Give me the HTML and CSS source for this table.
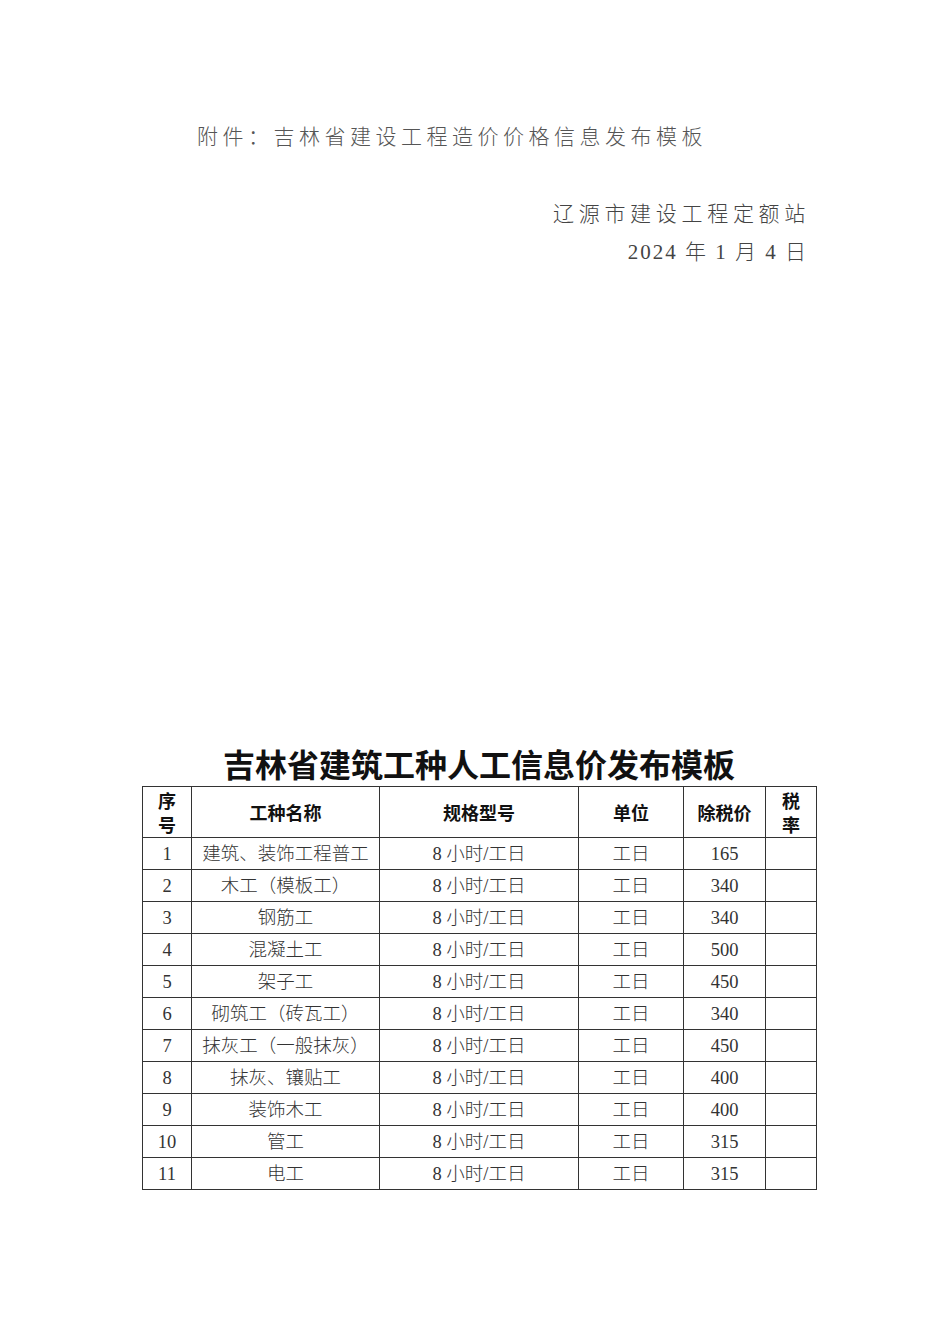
FILE: index.html
```html
<!DOCTYPE html>
<html lang="zh-CN">
<head>
<meta charset="utf-8">
<link rel="stylesheet" href="styles.css">
</head>
<body>
<div class="page">
  <p class="attach">附件：吉林省建设工程造价价格信息发布模板</p>
  <div class="org">
    <p class="org-name">辽源市建设工程定额站</p>
    <p class="org-date">2024 年 1 月 4 日</p>
  </div>
  <div class="sheet">
    <h1 class="title">吉林省建筑工种人工信息价发布模板</h1>
    <table class="grid">
      <colgroup>
        <col class="c1"><col class="c2"><col class="c3"><col class="c4"><col class="c5"><col class="c6">
      </colgroup>
      <thead>
        <tr><th>序<br>号</th><th>工种名称</th><th>规格型号</th><th>单位</th><th>除税价</th><th>税<br>率</th></tr>
      </thead>
      <tbody>
        <tr><td>1</td><td>建筑、装饰工程普工</td><td>8 小时/工日</td><td>工日</td><td>165</td><td></td></tr>
        <tr><td>2</td><td>木工（模板工）</td><td>8 小时/工日</td><td>工日</td><td>340</td><td></td></tr>
        <tr><td>3</td><td>钢筋工</td><td>8 小时/工日</td><td>工日</td><td>340</td><td></td></tr>
        <tr><td>4</td><td>混凝土工</td><td>8 小时/工日</td><td>工日</td><td>500</td><td></td></tr>
        <tr><td>5</td><td>架子工</td><td>8 小时/工日</td><td>工日</td><td>450</td><td></td></tr>
        <tr><td>6</td><td>砌筑工（砖瓦工）</td><td>8 小时/工日</td><td>工日</td><td>340</td><td></td></tr>
        <tr><td>7</td><td>抹灰工（一般抹灰）</td><td>8 小时/工日</td><td>工日</td><td>450</td><td></td></tr>
        <tr><td>8</td><td>抹灰、镶贴工</td><td>8 小时/工日</td><td>工日</td><td>400</td><td></td></tr>
        <tr><td>9</td><td>装饰木工</td><td>8 小时/工日</td><td>工日</td><td>400</td><td></td></tr>
        <tr><td>10</td><td>管工</td><td>8 小时/工日</td><td>工日</td><td>315</td><td></td></tr>
        <tr><td>11</td><td>电工</td><td>8 小时/工日</td><td>工日</td><td>315</td><td></td></tr>
      </tbody>
    </table>
  </div>
</div>
</body>
</html>
```

FILE: styles.css
```css
html, body {
  margin: 0;
  padding: 0;
  background: #ffffff;
}

.page {
  width: 950px;
  height: 1344px;
  font-family: "Liberation Serif", "Noto Sans CJK SC", serif;
  color: #222;
}

.attach {
  margin: 0;
  padding: 122px 0 0 197px;
  font-size: 21px;
  line-height: 30px;
  letter-spacing: 4.5px;
  color: #555;
  font-weight: 300;
}

.org {
  margin-top: 43px;
  padding-right: 140px;
  text-align: right;
  font-size: 21px;
  line-height: 38px;
  color: #444;
  font-weight: 300;
}

.org p {
  margin: 0;
}

.org-name {
  letter-spacing: 4.7px;
}

.org-date {
  letter-spacing: 2px;
  padding-right: 2px;
}

.sheet {
  margin: 472px 0 0 142px;
  width: 674px;
}

.title {
  margin: 0 0 3px;
  font-family: "Noto Sans CJK SC", sans-serif;
  font-weight: 700;
  font-size: 32px;
  line-height: 40px;
  text-align: center;
  color: #111;
}

.grid {
  width: 674px;
  border-collapse: collapse;
  table-layout: fixed;
  border: 1.5px solid #555;
}

.c1 { width: 49px; }
.c2 { width: 188px; }
.c3 { width: 199px; }
.c4 { width: 105px; }
.c5 { width: 82px; }
.c6 { width: 51px; }

.grid th,
.grid td {
  border: 1px solid #333;
  padding: 0;
  text-align: center;
  white-space: nowrap;
}

.grid th {
  height: 50px;
  font-family: "Noto Sans CJK SC", sans-serif;
  font-weight: 700;
  font-size: 18px;
  line-height: 24px;
  color: #111;
}

.grid td {
  height: 31px;
  font-size: 18.5px;
  line-height: 24px;
  color: #333;
  font-weight: 300;
}
```
